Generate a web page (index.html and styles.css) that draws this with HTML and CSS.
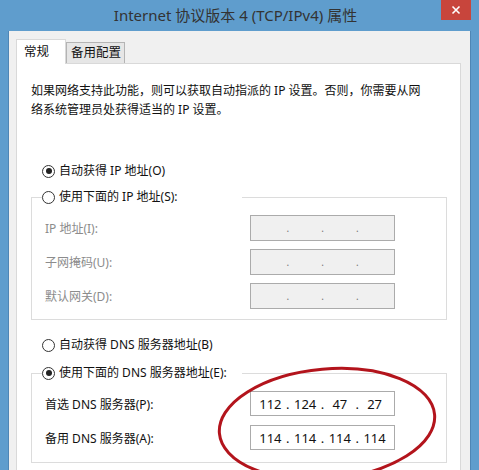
FILE: index.html
```html
<!DOCTYPE html>
<html lang="zh-CN">
<head>
  <meta charset="UTF-8">
  <title>Internet 协议版本 4 (TCP/IPv4) 属性</title>
  <link rel="stylesheet" href="styles.css">
</head>
<body>
  <div class="window">
    <div class="titlebar">
      <span></span>
      <h1 class="title">Internet 协议版本 4 (TCP/IPv4) 属性</h1>
      <div class="close">
        <svg width="10" height="10" viewBox="0 0 10 10"><path d="M1.5 1.5 L8.5 8.5 M8.5 1.5 L1.5 8.5" stroke="#fff" stroke-width="1.6"/></svg>
      </div>
    </div>

    <div class="client">
      <div class="tabs">
        <div class="tab active">常规</div>
        <div class="tab">备用配置</div>
      </div>

      <div class="panel">
        <p class="desc">如果网络支持此功能，则可以获取自动指派的 IP 设置。否则，你需要从网<br>络系统管理员处获得适当的 IP 设置。</p>

        <div class="radio-row first">
          <span class="radio checked"></span>自动获得 IP 地址(O)
        </div>

        <fieldset class="group ip-group">
          <legend><span class="radio"></span>使用下面的 IP 地址(S):</legend>
          <div class="field disabled">
            <span class="label">IP 地址(I):</span>
            <div class="ipbox"><span></span><i>.</i><span></span><i>.</i><span></span><i>.</i><span></span></div>
          </div>
          <div class="field disabled">
            <span class="label">子网掩码(U):</span>
            <div class="ipbox"><span></span><i>.</i><span></span><i>.</i><span></span><i>.</i><span></span></div>
          </div>
          <div class="field disabled">
            <span class="label">默认网关(D):</span>
            <div class="ipbox"><span></span><i>.</i><span></span><i>.</i><span></span><i>.</i><span></span></div>
          </div>
        </fieldset>

        <div class="radio-row dns-auto">
          <span class="radio"></span>自动获得 DNS 服务器地址(B)
        </div>

        <fieldset class="group dns-group">
          <legend><span class="radio checked"></span>使用下面的 DNS 服务器地址(E):</legend>
          <div class="field">
            <span class="label">首选 DNS 服务器(P):</span>
            <div class="ipbox"><span>112</span><i>.</i><span>124</span><i>.</i><span>47</span><i>.</i><span>27</span></div>
          </div>
          <div class="field">
            <span class="label">备用 DNS 服务器(A):</span>
            <div class="ipbox"><span>114</span><i>.</i><span>114</span><i>.</i><span>114</span><i>.</i><span>114</span></div>
          </div>
        </fieldset>
      </div>
    </div>
  </div>

  <!-- hand drawn mark over the DNS fields -->
  <svg class="mark" width="479" height="470" viewBox="0 0 479 470">
    <ellipse cx="327" cy="424" rx="108" ry="55" transform="rotate(-5 327 424)" fill="none" stroke="#b3141c" stroke-width="3"/>
  </svg>
</body>
</html>
```

FILE: styles.css
```css
:root {
  --frame: #5f9dcd;
  --client: #f0f0f0;
  --line: #d9d9d9;
  --text: #111;
  --muted: #8c8c8c;
}
html, body {
  margin: 0;
  height: 100%;
}
body {
  position: relative;
  width: 479px;
  height: 470px;
  overflow: hidden;
  background: var(--frame);
  font-family: "Noto Sans", "Noto Sans CJK SC", sans-serif;
  font-size: 12px;
  color: var(--text);
}
.window {
  display: flex;
  flex-direction: column;
  height: 100%;
  overflow: hidden;
}
.titlebar {
  display: grid;
  grid-template-columns: 1fr auto 1fr;
  flex: none;
  height: 31px;
  padding-right: 8px;
}
.title {
  margin: 0;
  font-size: 15px;
  font-weight: normal;
  line-height: 31px;
  color: #333;
}
.close {
  justify-self: end;
  width: 30px;
  height: 20px;
  background: #c8453c;
  display: flex;
  align-items: center;
  justify-content: center;
}
.client {
  flex: 1;
  min-height: 0;
  overflow: hidden;
  display: flex;
  flex-direction: column;
  margin: 0 8px;
  background: var(--client);
  border-left: 1px solid #4f86b5;
  border-right: 1px solid #4f86b5;
  padding: 8px 9px 0 7px;
}
.tabs {
  display: flex;
  align-items: flex-end;
  flex: none;
  height: 24px;
}
.tab {
  height: 21px;
  line-height: 20px;
  padding: 0 3px 0 4px;
  font-size: 12.5px;
  background: #e6e6e6;
  border: 1px solid #b4b4b4;
  border-bottom: none;
  box-sizing: border-box;
}
.tab.active {
  position: relative;
  z-index: 1;
  width: 50px;
  height: 25px;
  margin-bottom: -1px;
  line-height: 24px;
  padding-left: 7px;
  background: #fff;
  border-color: var(--line);
}
.panel {
  flex: 1;
  background: #fff;
  border: 1px solid var(--line);
  border-bottom: none;
  padding: 17px 13px 0 14px;
}
.desc {
  margin: 0;
  line-height: 19px;
  white-space: nowrap;
}
.radio-row,
legend {
  display: flex;
  align-items: center;
  height: 16px;
  line-height: 16px;
}
.radio-row {
  padding-left: 11px;
}
.radio-row.first {
  margin-top: 44px;
}
.radio-row.dns-auto {
  margin-top: 17px;
}
.radio {
  width: 11px;
  height: 11px;
  border: 1px solid #333;
  border-radius: 50%;
  margin-right: 4px;
  background: #fff;
  display: flex;
  align-items: center;
  justify-content: center;
}
.radio.checked::after {
  content: "";
  width: 6px;
  height: 6px;
  border-radius: 50%;
  background: #222;
}
.group {
  margin: 0;
  border: 1px solid #dcdcdc;
  padding: 10px 0 10px 13px;
}
.ip-group {
  margin-top: 10px;
}
.dns-group {
  margin-top: 12px;
  padding-bottom: 12px;
}
legend {
  width: 200px;
  padding: 0;
  margin-left: -3px;
}
.field {
  display: flex;
  align-items: center;
  height: 26px;
}
.field + .field {
  margin-top: 8px;
}
.dns-group .field {
  height: 25px;
}
.dns-group .field + .field {
  margin-top: 9px;
}
.label {
  width: 205px;
}
.disabled .label {
  color: var(--muted);
}
.ipbox {
  display: flex;
  align-items: center;
  width: 145px;
  height: 100%;
  box-sizing: border-box;
  padding: 0 4px 0 4px;
  border: 1px solid #ababab;
  background: #fff;
  font-size: 13px;
}
.disabled .ipbox {
  background: #f0f0f0;
}
.ipbox span {
  width: 31px;
  text-align: center;
}
.ipbox i {
  width: 4px;
  font-style: normal;
  text-align: center;
}
.disabled .ipbox i {
  color: #777;
  font-size: 10px;
}
.mark {
  position: absolute;
  left: 0;
  top: 0;
  pointer-events: none;
}
```
